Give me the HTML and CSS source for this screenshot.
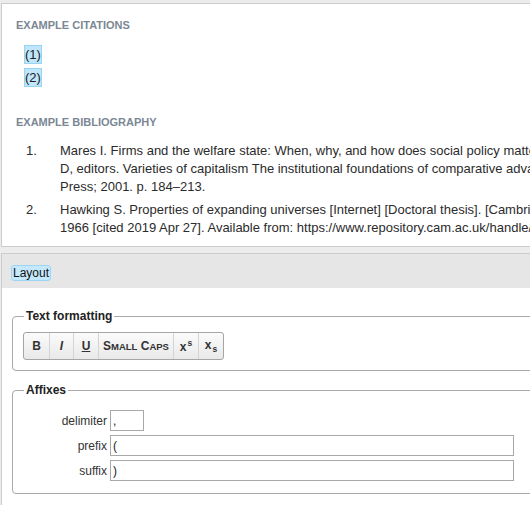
FILE: index.html
```html
<!DOCTYPE html>
<html>
<head>
<meta charset="utf-8">
<link rel="stylesheet" href="styles.css">
</head>
<body>
<div class="page">
  <div class="panel preview">
    <div class="heading">EXAMPLE CITATIONS</div>
    <div class="citations">
      <div class="cite"><span class="hl">(1)</span></div>
      <div class="cite"><span class="hl">(2)</span></div>
    </div>
    <div class="heading bib-heading">EXAMPLE BIBLIOGRAPHY</div>
    <div class="bib">
      <div class="entry">
        <div class="num">1.</div>
        <div class="text">Mares I. Firms and the welfare state: When, why, and how does social policy matter to employers? In: Hall PA, Soskice<br>D, editors. Varieties of capitalism The institutional foundations of comparative advantage. Oxford: Oxford University<br>Press; 2001. p. 184–213.</div>
      </div>
      <div class="entry">
        <div class="num">2.</div>
        <div class="text">Hawking S. Properties of expanding universes [Internet] [Doctoral thesis]. [Cambridge]: University of Cambridge;<br>1966 [cited 2019 Apr 27]. Available from: https://www.repository.cam.ac.uk/handle/1810/251038</div>
      </div>
    </div>
  </div>

  <div class="panel editor">
    <div class="editor-head"><span class="hl-tab">Layout</span></div>
    <div class="editor-body">
      <fieldset class="group">
        <legend>Text formatting</legend>
        <div class="toolbar">
          <span class="btn b">B</span>
          <span class="btn i">I</span>
          <span class="btn u">U</span>
          <span class="btn sc">S<span class="small">MALL</span>&nbsp;C<span class="small">APS</span></span>
          <span class="btn"><span>x<span class="sup">s</span></span></span>
          <span class="btn"><span>x<span class="sub">s</span></span></span>
        </div>
      </fieldset>
      <fieldset class="group affixes">
        <legend>Affixes</legend>
        <div class="form">
          <label class="lbl">delimiter</label>
          <input class="inp short" type="text" value=",">
          <label class="lbl">prefix</label>
          <input class="inp long" type="text" value="(">
          <label class="lbl">suffix</label>
          <input class="inp long" type="text" value=")">
        </div>
      </fieldset>
    </div>
  </div>
</div>
</body>
</html>
```
FILE: styles.css
```css
html, body {
  margin: 0;
  padding: 0;
  background: #ececec;
  overflow: hidden;
  font-family: "Liberation Sans", Arial, sans-serif;
  color: #333;
}

.page {
  width: 780px;
  padding-top: 3px;
}

.panel {
  margin-left: 1px;
  border: 1px solid #cccccc;
  background: #ffffff;
}

.preview {
  padding: 15px 14px 9px 14px;
}

.heading {
  font-size: 11px;
  line-height: 13px;
  font-weight: bold;
  color: #7b8794;
}

.citations {
  margin-top: 13px;
  padding-left: 8px;
}

.cite {
  margin-bottom: 4px;
  font-size: 13px;
}

.cite:last-child {
  margin-bottom: 0;
}

.hl {
  display: inline-block;
  line-height: 17px;
  background: #bfe6fb;
  border: 1px solid #97d4f4;
  color: #222;
}

.bib-heading {
  margin-top: 29px;
}

.bib {
  margin-top: 13px;
  padding-left: 10px;
  font-size: 13px;
  line-height: 18px;
  color: #2b2b2b;
}

.entry {
  display: flex;
  margin-bottom: 5px;
}

.entry:last-child {
  margin-bottom: 0;
}

.num {
  width: 34px;
  flex: none;
}

.text {
  white-space: nowrap;
}

.editor {
  margin-top: 6px;
  border-bottom: none;
  height: 260px;
}

.editor-head {
  background: #e6e6e6;
  height: 34px;
  box-sizing: border-box;
  padding: 9px 0 0 9px;
}

.hl-tab {
  display: inline-block;
  font-size: 12px;
  line-height: 14px;
  padding: 0 1px;
  color: #111;
  background: #c5e9fc;
  border: 1px solid #9dd6f5;
  border-radius: 3px;
}

.editor-body {
  padding: 21px 0 0 10px;
}

.group {
  margin: 0 0 12px 0;
  padding: 9px 10px 10px 10px;
  border: 1px solid #a8a8a8;
  border-radius: 4px;
  min-width: 0;
}

.group legend {
  padding: 0 2px;
  margin-left: 1px;
  font-size: 12px;
  line-height: 14px;
  font-weight: bold;
  color: #222;
}

.toolbar {
  display: inline-flex;
  height: 28px;
  box-sizing: border-box;
  border: 1px solid #a5a5a5;
  border-radius: 3px;
  background: linear-gradient(#fbfbfb, #e9e9e9);
}

.btn {
  display: flex;
  align-items: center;
  justify-content: center;
  min-width: 25px;
  box-sizing: border-box;
  padding: 0 5px;
  font-size: 12px;
  font-weight: bold;
  color: #333;
  border-left: 1px solid #d4d4d4;
}

.btn:first-child {
  border-left: none;
  min-width: 25px;
}

.btn.i {
  font-style: italic;
  min-width: 24px;
}

.btn.u {
  text-decoration: underline;
}

.btn.sc {
  padding: 0 4px;
  min-width: 75px;
}

.btn.sc .small {
  font-size: 9.5px;
}

.btn .sup, .btn .sub {
  display: inline-block;
  font-size: 8.5px;
  margin-left: 1px;
}

.btn .sup {
  vertical-align: 5px;
}

.btn .sub {
  vertical-align: -3px;
}

.affixes {
  padding-top: 13px;
  padding-bottom: 12px;
}

.form {
  display: grid;
  grid-template-columns: 84px auto;
  column-gap: 3px;
  row-gap: 4px;
  justify-items: start;
  align-items: center;
}

.lbl {
  justify-self: end;
  font-size: 12px;
  color: #333;
}

.inp {
  box-sizing: border-box;
  height: 21px;
  margin: 0;
  padding: 0 2px;
  border: 1px solid #a8a8a8;
  font-family: "Liberation Sans", Arial, sans-serif;
  font-size: 12px;
  color: #222;
  background: #fff;
  outline: none;
}

.inp.short {
  width: 34px;
}

.inp.long {
  width: 404px;
}
```
